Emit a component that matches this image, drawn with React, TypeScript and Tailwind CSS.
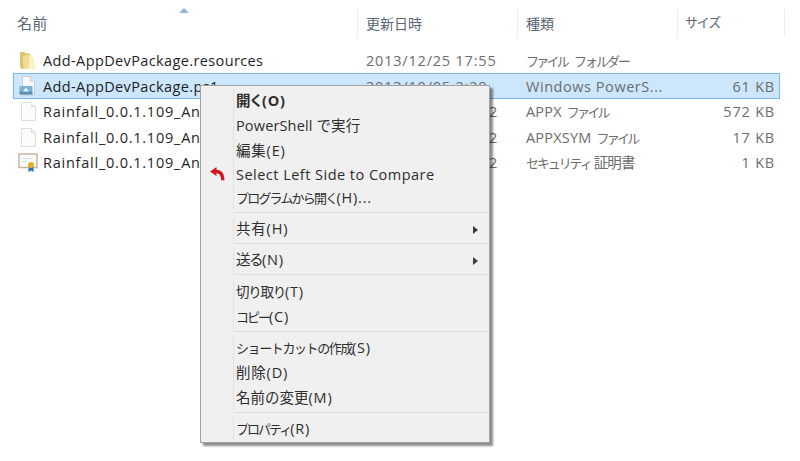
import type { ReactNode } from "react";

const font = "font-['Open_Sans','Noto_Sans_CJK_JP',sans-serif]";

function FolderIcon() {
  return (
    <svg width="18" height="19" viewBox="0 0 18 19">
      <path d="M1 1h4.5l1.5 1.5h4V17l-8 1-2-2z" fill="#dcc46e" />
      <path d="M3.5 5l8-1.5L13 5l3.5 12.5H4.5z" fill="#f3dd92" />
      <path d="M10.5 4l1.5-.3L16.8 17.5H9.5z" fill="#fbf0c6" />
    </svg>
  );
}
function ScriptIcon() {
  return (
    <svg width="20" height="20" viewBox="0 0 20 20">
      <path d="M4.5 .5h8l4 4.5v14h-12z" fill="#f7f8f9" stroke="#c8ccd0" />
      <path d="M12.5 .5V5h4" fill="#e4e8ec" stroke="#c8ccd0" />
      <rect x="1.5" y="10" width="13" height="8.5" rx="1" fill="#7fb0d6" />
      <rect x="1.5" y="15.5" width="13" height="3" rx="1" fill="#5d8fb5" />
      <path d="M5 15.5l3-4 3 4z" fill="#e4f2fb" />
    </svg>
  );
}
function BlankIcon() {
  return (
    <svg width="17" height="19" viewBox="0 0 17 19">
      <path d="M1.5 .5h10l4 4v14h-14z" fill="#fcfcfc" stroke="#dedede" />
      <path d="M11.5 .5v4h4" fill="#f2f2f2" stroke="#dedede" />
    </svg>
  );
}
function CertIcon() {
  return (
    <svg width="20" height="20" viewBox="0 0 20 20">
      <rect x="1" y="1" width="18" height="13.5" fill="#fafafa" stroke="#c9b79f" strokeWidth="1.5" />
      <path d="M4 5.5h9M4 8.5h5" stroke="#d3dbe2" />
      <path d="M10.8 13l-.6 6 2.8-1.6 2.8 1.6-.6-6z" fill="#2f6fc0" />
      <circle cx="13" cy="12" r="3" fill="#e8ad2c" />
    </svg>
  );
}

function Header({ w, label, cls }: { w: string; label: string; cls: string }) {
  return (
    <div className={`${w} ${cls} h-[28px] flex items-center border-r border-[#e9eef4] text-[#5a6672] shrink-0`}>
      {label}
    </div>
  );
}

const rows: {
  icon: ReactNode;
  name: string;
  nt: string;
  date: string;
  edge?: string;
  type: ReactNode;
  size: string;
  selected?: boolean;
}[] = [
  {
    icon: <FolderIcon />,
    name: "Add-AppDevPackage.resources",
    nt: "tracking-[0.38px]",
    date: "2013/12/25 17:55",
    type: (
      <>
        <span className="text-[13px] tracking-[-2.75px]">ファイル</span>
        <span className="text-[13px] tracking-[-2px] ml-[7px]">フォルダー</span>
      </>
    ),
    size: "",
  },
  {
    icon: <ScriptIcon />,
    name: "Add-AppDevPackage.ps1",
    nt: "tracking-[0.38px]",
    date: "2013/10/05 2:28",
    type: <span className="tracking-[0.55px]">Windows PowerS...</span>,
    size: "61 KB",
    selected: true,
  },
  {
    icon: <BlankIcon />,
    name: "Rainfall_0.0.1.109_An",
    nt: "tracking-[0.76px]",
    date: "",
    edge: "2",
    type: (
      <>
        <span className="tracking-[0.2px]">APPX</span>
        <span className="text-[13px] tracking-[-2.75px] ml-[5px]">ファイル</span>
      </>
    ),
    size: "572 KB",
  },
  {
    icon: <BlankIcon />,
    name: "Rainfall_0.0.1.109_An",
    nt: "tracking-[0.76px]",
    date: "",
    edge: "2",
    type: (
      <>
        <span className="tracking-[0.2px]">APPXSYM</span>
        <span className="text-[13px] tracking-[-2.75px] ml-[5px]">ファイル</span>
      </>
    ),
    size: "17 KB",
  },
  {
    icon: <CertIcon />,
    name: "Rainfall_0.0.1.109_An",
    nt: "tracking-[0.76px]",
    date: "",
    edge: "2",
    type: (
      <>
        <span className="text-[13px] tracking-[-2.1px]">セキュリティ</span>
        <span className="tracking-[-0.8px] ml-[3px]">証明書</span>
      </>
    ),
    size: "1 KB",
  },
];

function Item({
  label,
  suffix,
  bold,
  arrow,
  icon,
  h,
  t,
  st = "tracking-[0.8px]",
}: {
  label: string;
  suffix?: string;
  bold?: boolean;
  arrow?: boolean;
  icon?: boolean;
  h: string;
  t: string;
  st?: string;
}) {
  return (
    <div className={`${h} flex items-center`}>
      <div className="w-[32px] shrink-0 h-full flex items-center justify-center border-r border-[#e2e2e2]">
        {icon && (
          <svg width="15" height="14" viewBox="0 0 15 14" className="mr-[1px] mt-[-3px]">
            <path d="M6.5 0L0 4.6 6.5 9z" fill="#cf1820" />
            <path d="M5 4.6c4.5-.6 7.5 1.6 7.8 8.6" fill="none" stroke="#cf1820" strokeWidth="3.4" />
          </svg>
        )}
      </div>
      <div className={`pl-[2px] pb-[1.5px] flex-1 text-[14.5px] text-[#2e2e2e] whitespace-nowrap ${bold ? "font-bold" : ""}`}>
        <span className={t}>{label}</span>
        {suffix && <span className={st}>{suffix}</span>}
      </div>
      {arrow && (
        <svg width="5" height="8" viewBox="0 0 5 8" className="mr-[10px]">
          <path d="M0 0l5 4-5 4z" fill="#3c3c3c" />
        </svg>
      )}
    </div>
  );
}

function Sep({ m }: { m: string }) {
  return (
    <div className={`${m} flex`}>
      <div className="w-[32px] border-r border-[#e2e2e2] h-px shrink-0" />
      <div className="flex-1 h-px bg-[#dcdcdc]" />
    </div>
  );
}

export default function App() {
  return (
    <div className={`${font} relative w-[800px] h-[461px] bg-white overflow-hidden`}>
      <svg width="12" height="5" viewBox="0 0 12 5" className="absolute left-[178px] top-[8px]">
        <path d="M6 0l5 5H1z" fill="#8fb4d6" />
      </svg>

      <div className="flex pt-[9px] pl-[6px] w-[785px]">
        <Header w="w-[352px]" cls="pl-[11px] text-[15px] tracking-[0.3px]" label="名前" />
        <Header w="w-[160px]" cls="pl-[8px] text-[14px]" label="更新日時" />
        <Header w="w-[160px]" cls="pl-[8px] text-[14px]" label="種類" />
        <Header w="w-[107px]" cls="pl-[7px] text-[13px] tracking-[-1.2px]" label="サイズ" />
      </div>

      <div className="mt-[10.5px] ml-[13px] w-[767px]">
        {rows.map((r, i) => (
          <div
            key={i}
            className={`h-[25.6px] pt-[1px] flex items-center text-[14.5px] border ${r.selected ? "bg-[#cce6fb] border-[#7ab8ec]" : "border-transparent"}`}
          >
            <div className="w-[29px] shrink-0 flex justify-center pr-[1px]">{r.icon}</div>
            <div className={`${r.nt} w-[315px] shrink-0 text-[#1f1f1f] whitespace-nowrap overflow-hidden`}>{r.name}</div>
            <div className="w-[160px] shrink-0 pl-[8px] text-[#6d6d6d] tracking-[0.8px] whitespace-nowrap text-right pr-[20px]">
              {r.date ? <span className="block text-left">{r.date}</span> : r.edge}
            </div>
            <div className="w-[160px] shrink-0 pl-[8px] text-[#6d6d6d] whitespace-nowrap">{r.type}</div>
            <div className="flex-1 text-right pr-[4px] tracking-[0.8px] text-[#6d6d6d] whitespace-nowrap">{r.size}</div>
          </div>
        ))}
      </div>

      <div className="absolute left-[200px] top-[85px] w-[290px] h-[358px] bg-[#f0f0f0] border border-[#a0a0a0] shadow-[3px_3px_2px_rgba(0,0,0,0.45)] py-[3px] px-[1px]">
        <Item h="h-[25px]" t="tracking-[-1.5px]" label="開く" suffix="(O)" bold />
        <Item h="h-[25px]" t="tracking-[0.15px]" label="PowerShell で実行" />
        <Item h="h-[25px]" t="tracking-[0.8px]" label="編集" suffix="(E)" />
        <Item h="h-[23px]" t="tracking-[0.48px]" label="Select Left Side to Compare" icon />
        <Item h="h-[23px]" t="text-[13px] tracking-[-1.8px]" label="プログラムから開く" suffix="(H)..." />
        <Sep m="mt-[2px] mb-[4px]" />
        <Item h="h-[25px]" t="tracking-[0.8px]" label="共有" suffix="(H)" arrow />
        <Sep m="mt-[1px] mb-[4px]" />
        <Item h="h-[25px]" t="tracking-[-1.5px]" label="送る" suffix="(N)" arrow />
        <Sep m="mt-[1px] mb-[5px]" />
        <Item h="h-[25px]" t="text-[13.5px] tracking-[-1.25px]" label="切り取り" suffix="(T)" />
        <Item h="h-[25px]" t="text-[13px] tracking-[-2px]" label="コピー" suffix="(C)" />
        <Sep m="mt-[1px] mb-[4px]" />
        <Item h="h-[25px]" t="text-[13px] tracking-[-1.4px]" label="ショートカットの作成" suffix="(S)" />
        <Item h="h-[25px]" t="tracking-[0.8px]" label="削除" suffix="(D)" />
        <Item h="h-[25px]" t="tracking-[0px]" label="名前の変更" suffix="(M)" />
        <Sep m="mt-[1px] mb-[4px]" />
        <Item h="h-[25px]" t="text-[13px] tracking-[-2px]" label="プロパティ" suffix="(R)" />
      </div>
    </div>
  );
}
